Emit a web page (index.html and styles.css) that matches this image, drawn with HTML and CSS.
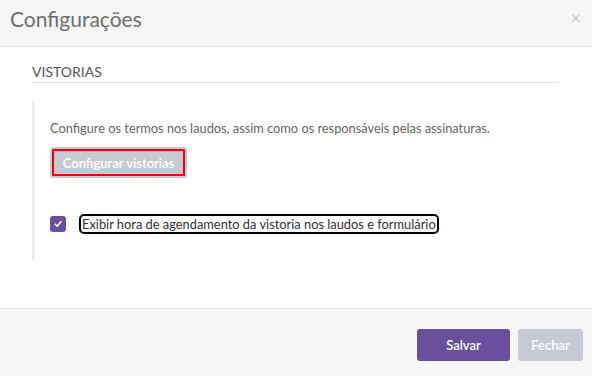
FILE: index.html
```html
<!DOCTYPE html>
<html lang="pt">
<head>
<meta charset="utf-8">
<link rel="stylesheet" href="styles.css">
</head>
<body>
<div class="modal">
  <header class="modal-header">
    <h1 class="modal-title">Configurações</h1>
    <span class="close">×</span>
  </header>
  <main class="modal-body">
    <h2 class="section-title">VISTORIAS</h2>
    <div class="section">
      <p class="desc">Configure os termos nos laudos, assim como os responsáveis pelas assinaturas.</p>
      <button class="btn btn-grey btn-focus">Configurar vistorias</button>
      <label class="check-row">
        <span class="checkbox"><svg width="10" height="10" viewBox="0 0 10 10"><path d="M2 5.2 L4.1 7.2 L8 2.8" fill="none" stroke="#fff" stroke-width="1.6" stroke-linecap="round" stroke-linejoin="round"/></svg></span>
        <span class="check-label">Exibir hora de agendamento da vistoria nos laudos e formulário</span>
      </label>
    </div>
  </main>
  <footer class="modal-footer">
    <button class="btn btn-primary">Salvar</button>
    <button class="btn btn-grey btn-small">Fechar</button>
  </footer>
</div>
</body>
</html>
```
FILE: styles.css
```css
* { box-sizing: border-box; }
html, body { margin: 0; padding: 0; }
body {
  width: 592px;
  height: 376px;
  font-family: Lato, "Open Sans", sans-serif;
  background: #fff;
  overflow: hidden;
}
.modal {
  display: flex;
  flex-direction: column;
  height: 376px;
}
.modal-header {
  height: 47px;
  background: #f6f6f6;
  border-bottom: 1px solid #e3e3e3;
  display: flex;
  align-items: flex-start;
  justify-content: space-between;
  padding: 6px 11px 0 10px;
}
.modal-title {
  margin: 0;
  font-size: 21px;
  font-weight: 400;
  color: #6e6e6e;
  line-height: 26px;
}
.close {
  color: #c8c8c8;
  font-size: 18px;
  line-height: 16px;
  margin-top: 3px;
}
.modal-body {
  flex: 1;
  padding: 17px 34px 0 32px;
}
.section-title {
  margin: 0;
  font-size: 14px;
  font-weight: 400;
  color: #555;
  line-height: 16px;
  padding-bottom: 2px;
  border-bottom: 1px solid #e5e5e5;
}
.section {
  margin-top: 18px;
  border-left: 3px solid #eeeeee;
  padding: 19px 0 0 15px;
  height: 159px;
}
.desc {
  margin: 0;
  font-size: 12.8px;
  color: #666;
  line-height: 16px;
}
.btn {
  border: none;
  border-radius: 3px;
  font-family: Lato, "Open Sans", sans-serif;
  font-size: 13px;
  font-weight: 600;
  color: #fff;
  cursor: pointer;
}
.btn-grey {
  background: #c6cad4;
}
.btn-focus {
  display: block;
  margin-top: 11px;
  width: 137px;
  height: 31px;
  outline: 2px solid #e8000d;
  outline-offset: -4px;
  padding: 0;
}
.check-row {
  display: flex;
  align-items: center;
  margin-top: 38px;
  gap: 15px;
}
.checkbox {
  width: 16px;
  height: 16px;
  border-radius: 3px;
  background: #6a4fa0;
  display: flex;
  align-items: center;
  justify-content: center;
}
.check-label {
  font-size: 12.85px;
  color: #333;
  line-height: 16px;
  outline: 2px solid #000;
  border-radius: 3px;
  padding: 0 1px;
}
.modal-footer {
  height: 68px;
  background: #f6f6f6;
  border-top: 1px solid #e3e3e3;
  display: flex;
  justify-content: flex-end;
  align-items: flex-start;
  padding: 20px 9px 0 0;
  gap: 8px;
}
.btn-primary {
  background: #6a4f9e;
  width: 93px;
  height: 32px;
}
.btn-small {
  width: 65px;
  height: 32px;
}
```
